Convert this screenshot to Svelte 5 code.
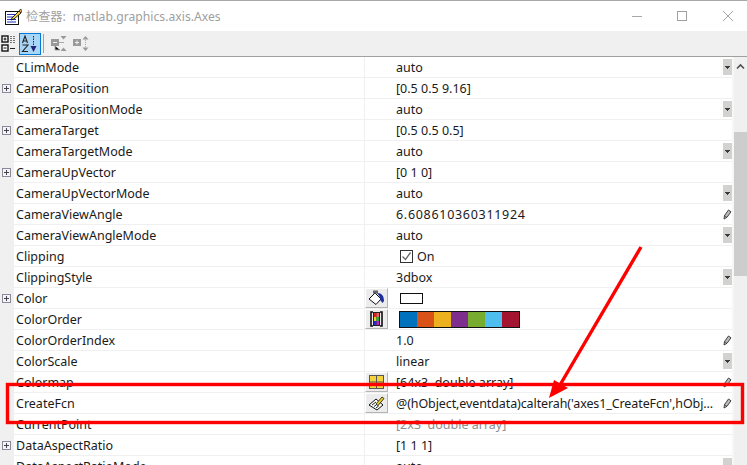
<script>
const rows = [
  { name: "CLimMode", value: "auto", kind: "drop" },
  { name: "CameraPosition", value: "[0.5 0.5 9.16]", plus: true },
  { name: "CameraPositionMode", value: "auto", kind: "drop" },
  { name: "CameraTarget", value: "[0.5 0.5 0.5]", plus: true },
  { name: "CameraTargetMode", value: "auto", kind: "drop" },
  { name: "CameraUpVector", value: "[0 1 0]", plus: true },
  { name: "CameraUpVectorMode", value: "auto", kind: "drop" },
  { name: "CameraViewAngle", value: "6.608610360311924", kind: "edit", fit: "wide" },
  { name: "CameraViewAngleMode", value: "auto", kind: "drop" },
  { name: "Clipping", check: true },
  { name: "ClippingStyle", value: "3dbox", kind: "drop" },
  { name: "Color", plus: true, btn: "fill", swatch: true },
  { name: "ColorOrder", btn: "order", colors: true },
  { name: "ColorOrderIndex", value: "1.0", kind: "edit" },
  { name: "ColorScale", value: "linear", kind: "drop" },
  { name: "Colormap", value: "[64x3  double array]", btn: "map", kind: "edit" },
  { name: "CreateFcn", value: "@(hObject,eventdata)calterah('axes1_CreateFcn',hObj...", btn: "fcn", kind: "edit", fit: "tight" },
  { name: "CurrentPoint", value: "[2x3  double array]", muted: true },
  { name: "DataAspectRatio", value: "[1 1 1]", plus: true },
  { name: "DataAspectRatioMode", value: "auto", kind: "drop" }
];
const palette = ["#0072bd", "#d95319", "#edb120", "#7e2f8e", "#77ac30", "#4dbeee", "#a2142f"];
</script>

<div class="window">
  <header class="title">
    <svg class="app-icon" width="17" height="17" viewBox="0 0 17 17">
      <rect x=".5" y="3.500" width="13" height="13" fill="#fff" stroke="#111"/>
      <path d="M2 6.500h8M2 9h7M2 11.500h9M2 14h9" stroke="#2233bb"/>
      <path d="M7 10l7-7 2 2-7 6-3 1z" fill="#f0d040" stroke="#111" stroke-width=".9"/>
      <path d="M14 3l1.500-2 1.500 1.500-1 2.500z" fill="#d9a050" stroke="#111" stroke-width=".7"/>
    </svg>
    <span class="caption">检查器:</span>
    <span class="caption object">matlab.graphics.axis.Axes</span>
    <div class="controls">
      <svg width="12" height="12" viewBox="0 0 12 12"><path d="M0 6.500h10" stroke="#a8a8a8"/></svg>
      <svg width="12" height="12" viewBox="0 0 12 12"><rect x=".500" y="1.500" width="9" height="9" fill="none" stroke="#a0a0a0"/></svg>
      <svg width="12" height="12" viewBox="0 0 12 12"><path d="M1 1l10 10M11 1L1 11" stroke="#a8a8a8"/></svg>
    </div>
  </header>

  <div class="toolbar">
    <svg class="view-icon" width="15" height="17" viewBox="0 0 15 17">
      <rect x="1" y="1" width="6" height="6" fill="#fff" stroke="#111" stroke-width="1.400"/>
      <path d="M2.500 4h3M4 2.500v3" stroke="#111"/>
      <rect x="1" y="10" width="6" height="6" fill="#fff" stroke="#111" stroke-width="1.400"/>
      <path d="M2.500 13h3" stroke="#111"/>
      <path d="M9 1.500h6M9 3.500h6M9 5.500h6M9 7.500h6" stroke="#777" stroke-dasharray="2 1"/>
      <path d="M9 13.500h5" stroke="#222"/>
    </svg>
    <button class="tool active" aria-label="sort">
      <svg width="18" height="18" viewBox="0 0 18 18">
        <path d="M1.500 8l2.500-7 2.500 7M2.500 6h3M1.500 10h5.500l-5.500 6.500h5.500" fill="none" stroke="#222" stroke-width="1.100"/>
        <path d="M12.500 1v11" stroke="#22227a" stroke-dasharray="1.500 1"/>
        <path d="M9.500 11h6l-3 6z" fill="#22227a"/>
      </svg>
    </button>
    <span class="divider"></span>
    <svg class="collapse-icon" width="16" height="17" viewBox="0 0 16 17">
      <rect x="0" y="4" width="8" height="7" fill="#999"/>
      <path d="M2 7.500h4" stroke="#eee"/>
      <path d="M9.500 1h6l-3 3.500zM9.500 16h6l-3-3.500z" fill="#999"/>
      <path d="M4 11v4h5M8 7.500h5" stroke="#aaa"/>
    </svg>
    <svg class="expand-icon" width="16" height="17" viewBox="0 0 16 17">
      <rect x="0" y="4" width="8" height="7" fill="#999"/>
      <path d="M2 7.500h4M4 5.500v4" stroke="#eee"/>
      <path d="M9.500 4.500h6l-3-3.500zM9.500 12.500h6l-3 3.500z" fill="#999"/>
      <path d="M12.500 5v7" stroke="#aaa" stroke-dasharray="1 1"/>
    </svg>
  </div>

  <div class="body">
    <div class="grid">
      {#each rows as row}
        <div class="row">
          <div class="gutter">
            {#if row.plus}<span class="plus"></span>{/if}
          </div>
          <div class="name">{row.name}</div>
          <div class="btn-cell">
            {#if row.btn}
              <span class="cell-btn">
                {#if row.btn === "fill"}
                  <svg width="17" height="16" viewBox="0 0 17 16">
                    <path d="M1 9l6-6 6 6-5 5.500z" fill="#fff" stroke="#111"/>
                    <path d="M5 0.500h5v3H5z" fill="#666"/>
                    <path d="M9 3c5 0 7 3 7 8l-1.500 2-2-2.500-1-4z" fill="#1c2f9c"/>
                  </svg>
                {:else if row.btn === "order"}
                  <svg width="13" height="16" viewBox="0 0 13 16">
                    <path d="M3 1H1v14h2M10 1h2v14h-2" fill="none" stroke="#111" stroke-width="1.600"/>
                    <rect x="3" y="1" width="7" height="14" fill="#222"/>
                    <rect x="4" y="2" width="2.500" height="4" fill="#e02020"/>
                    <rect x="6.500" y="2" width="2.500" height="4" fill="#f06060"/>
                    <rect x="4" y="6" width="2.500" height="4" fill="#f0d020"/>
                    <rect x="6.500" y="6" width="2.500" height="4" fill="#20b040"/>
                    <rect x="4" y="10" width="2.500" height="4" fill="#2030d0"/>
                    <rect x="6.500" y="10" width="2.500" height="4" fill="#c020c0"/>
                  </svg>
                {:else if row.btn === "map"}
                  <svg width="15" height="14" viewBox="0 0 15 14">
                    <rect x=".5" y=".5" width="14" height="13" fill="#f5d33c" stroke="#555"/>
                    <path d="M7.500 1v12M1 7h13" stroke="#555"/>
                  </svg>
                {:else}
                  <svg width="17" height="16" viewBox="0 0 17 16">
                    <path d="M1 10l7-6 7 6-6 5z" fill="#fff" stroke="#111"/>
                    <path d="M4 10l4-3M6 11.500l4-3M8 13l3-2.500" stroke="#222"/>
                    <path d="M8 9l6-7 2 1.500-6 7z" fill="#f0d020" stroke="#111" stroke-width=".8"/>
                  </svg>
                {/if}
              </span>
            {/if}
          </div>
          <div class="value" class:muted={row.muted}>
            {#if row.check}
              <span class="check">
                <svg width="11" height="11" viewBox="0 0 11 11"><path d="M1.500 5.500l3 3 5-7" fill="none" stroke="#666" stroke-width="1.300"/></svg>
              </span>
              <span>On</span>
            {:else if row.swatch}
              <span class="swatch"></span>
            {:else if row.colors}
              <span class="colors">
                {#each palette as c}
                  <i style="background:{c}"></i>
                {/each}
              </span>
            {:else}
              <span class="text {row.fit ?? ""}">{row.value}</span>
            {/if}
          </div>
          <div class="end">
            {#if row.kind === "drop"}
              <span class="drop"></span>
            {:else if row.kind === "edit"}
              <svg width="9" height="11" viewBox="0 0 9 11">
                <path d="M1 10l.5-3.500 4-5.500 2.500 1.800-4 5.500z" fill="#bbb" stroke="#333" stroke-width=".9"/>
                <path d="M1.500 6.500l2.500 2" stroke="#333" stroke-width=".8"/>
              </svg>
            {/if}
          </div>
        </div>
      {/each}
    </div>
    <div class="scrollbar">
      <svg class="up" width="9" height="7" viewBox="0 0 9 7"><path d="M1 5.500l3.500-3.500 3.500 3.500" fill="none" stroke="#505050" stroke-width="1.600"/></svg>
      <div class="thumb"></div>
    </div>
  </div>

  <svg class="marks" width="747" height="465" viewBox="0 0 747 465">
    <rect x="7.500" y="384.500" width="735" height="38" fill="none" stroke="#fe0000" stroke-width="3.400"/>
    <path d="M641 247L560 385" stroke="#fe0000" stroke-width="3.400" fill="none"/>
    <path d="M549 398L554 380 568 388z" fill="#fe0000"/>
  </svg>
</div>

<style>
:global(body) {
  margin: 0;
  background: #fff;
}

.window {
  position: relative;
  width: 747px;
  height: 465px;
  overflow: hidden;
  font-family: "Noto Sans", "Noto Sans CJK SC", sans-serif;
  font-size: 12.5px;
  color: #1a1a1a;
}

.title {
  display: flex;
  align-items: center;
  height: 30px;
  border-top: 1px solid #a8a8a8;
  padding-left: 5px;
  background: #fff;
}

.app-icon {
  margin-right: 4px;
}

.caption {
  color: #a0a0a0;
  font-size: 12.200px;
}

.object {
  margin-left: 7px;
}

.controls {
  display: flex;
  gap: 33px;
  margin-left: auto;
  padding-right: 13px;
}

.toolbar {
  display: flex;
  align-items: center;
  height: 25px;
  padding-left: 1px;
  background: #f0f0f0;
  border-bottom: 1px solid #a0a0a0;
}

.tool {
  display: flex;
  align-items: center;
  justify-content: center;
  width: 22px;
  height: 22px;
  margin-left: 3px;
  padding: 0;
  box-sizing: border-box;
  border: 1px solid #0078d7;
  background: #a9d5f7;
}

.divider {
  width: 1px;
  height: 19px;
  margin-left: 2px;
  background: #a0a0a0;
}

.collapse-icon {
  margin-left: 7px;
}

.expand-icon {
  margin-left: 6px;
}

.body {
  display: flex;
  height: 408px;
}

.grid {
  width: 734px;
  flex: none;
  border-right: 2px solid #f7f7f7;
  box-sizing: border-box;
}

.row {
  display: flex;
  align-items: stretch;
  height: 21px;
  box-sizing: border-box;
  border-bottom: 1px solid #f0f0f0;
}

.gutter {
  display: flex;
  align-items: center;
  width: 14px;
  flex: none;
  background: #f0f0f0;
  margin-bottom: -1px;
}

.plus {
  width: 9px;
  height: 9px;
  margin-left: 2px;
  box-sizing: border-box;
  border: 1px solid #8a8a9a;
  background: linear-gradient(#444, #444) center / 5px 1px no-repeat,
    linear-gradient(#444, #444) center / 1px 5px no-repeat, #f4f4f8;
}

.name {
  display: flex;
  align-items: center;
  width: 351px;
  flex: none;
  padding-left: 2px;
  box-sizing: border-box;
  border-right: 1px solid #f0f0f0;
}

.btn-cell {
  display: flex;
  align-items: center;
  width: 31px;
  flex: none;
}

.cell-btn {
  display: flex;
  align-items: center;
  justify-content: center;
  width: 23px;
  height: 20px;
  box-sizing: border-box;
  background: #ececec;
  border: 1px solid #fff;
  border-right-color: #b4b4b4;
  border-bottom-color: #b4b4b4;
}

.value {
  display: flex;
  align-items: center;
  gap: 4px;
  flex: 1;
  min-width: 0;
  white-space: pre;
}

.wide {
  letter-spacing: .7px;
}

.tight {
  letter-spacing: -.1px;
}

.muted {
  color: #8e8e8e;
}

.check {
  display: flex;
  align-items: center;
  justify-content: center;
  width: 13px;
  height: 13px;
  box-sizing: border-box;
  margin-left: 4px;
  border: 1px solid #333;
  background: #fff;
}

.swatch {
  width: 21px;
  height: 9px;
  margin-left: 4px;
  border: 1px solid #111;
  background: #fff;
}

.colors {
  display: flex;
  margin-left: 3px;
  border: 1px solid #111;
}

.colors i {
  display: block;
  width: 17px;
  height: 15px;
}

.end {
  display: flex;
  align-items: center;
  justify-content: center;
  width: 9px;
  flex: none;
}

.drop {
  width: 9px;
  height: 16px;
  background: linear-gradient(#3c3c3c, #3c3c3c) 2px 7px / 5px 1px no-repeat,
    linear-gradient(#3c3c3c, #3c3c3c) 3px 8px / 3px 1px no-repeat,
    linear-gradient(#3c3c3c, #3c3c3c) 4px 9px / 1px 1px no-repeat,
    #d2d2d0;
}

.scrollbar {
  flex: 1;
  background: #f0f0f0;
}

.up {
  display: block;
  margin: 6px auto 0;
}

.thumb {
  width: 100%;
  height: 144px;
  margin-top: 62px;
  background: #cdcdcd;
}

.marks {
  position: absolute;
  left: 0;
  top: 0;
  pointer-events: none;
}
</style>
